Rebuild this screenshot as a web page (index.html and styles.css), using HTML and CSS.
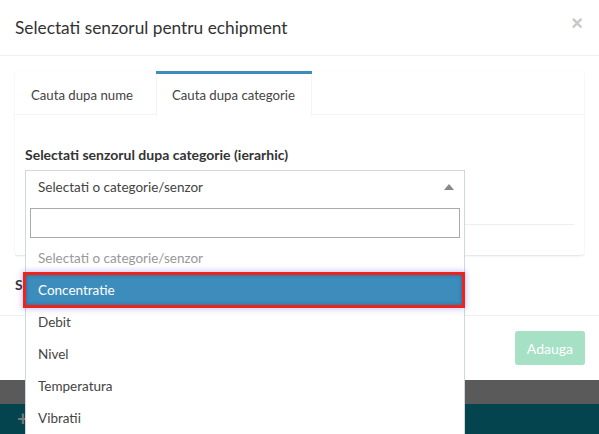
FILE: index.html
```html
<!DOCTYPE html>
<html lang="ro">
<head>
  <meta charset="UTF-8" />
  <meta name="viewport" content="width=device-width, initial-scale=1.0"/>
  <title>Selectati senzorul</title>
  <link rel="stylesheet" href="styles.css">
</head>
<body>
  <div class="modal">
    <div class="modal-header">
      <h4 class="modal-title">Selectati senzorul pentru echipment</h4>
      <button class="close">&times;</button>
    </div>

    <div class="modal-body">
      <div class="tabs-box">
        <ul class="tabs">
          <li><a>Cauta dupa nume</a></li>
          <li class="active"><a>Cauta dupa categorie</a></li>
        </ul>
        <div class="tab-content">
          <div class="form-group">
            <label>Selectati senzorul dupa categorie (ierarhic)</label>
            <div class="select-wrap">
              <div class="select">
                <span>Selectati o categorie/senzor</span>
                <span class="arrow"></span>
              </div>
              <!-- open dropdown of the select -->
              <div class="dropdown">
                <div class="search"><input type="text"></div>
                <ul class="options">
                  <li class="placeholder">Selectati o categorie/senzor</li>
                  <li class="highlighted">Concentratie</li>
                  <li>Debit</li>
                  <li>Nivel</li>
                  <li>Temperatura</li>
                  <li>Vibratii</li>
                </ul>
              </div>
            </div>
          </div>
          <hr>
        </div>
      </div>
      <label class="selected-label">S</label>
    </div>

    <div class="modal-footer">
      <button class="btn-add" disabled>Adauga</button>
    </div>
  </div>

  <div class="backdrop">
    <div class="page-bar"><span class="plus">+</span></div>
  </div>
</body>
</html>
```

FILE: styles.css
```css
* {
  box-sizing: border-box;
}

body {
  margin: 0;
  height: 434px;
  overflow: hidden;
  font-family: Lato, "Open Sans", sans-serif;
  font-size: 13.5px;
  line-height: 20px;
  color: #333;
  background: #5a5a5a;
}

.modal {
  background: #fff;
}

.modal-header {
  display: flex;
  justify-content: space-between;
  align-items: flex-start;
  padding: 15px;
  border-bottom: 1px solid #f0f0f0;
}

.modal-title {
  margin: 0;
  font-size: 17.3px;
  font-weight: 400;
  line-height: 25px;
  color: #333;
}

.close {
  border: 0;
  background: none;
  padding: 0;
  margin-top: -2px;
  margin-right: 1px;
  font-size: 20px;
  font-weight: 700;
  line-height: 20px;
  color: #c8c8c8;
  font-family: Arial, sans-serif;
}

.modal-body {
  padding: 15px;
}

.tabs-box {
  background: #fff;
  border-radius: 3px;
  box-shadow: 0 1px 2px rgba(0,0,0,0.12);
  margin-bottom: 20px;
}

.tabs {
  display: flex;
  list-style: none;
  margin: 0;
  padding: 0;
  border-bottom: 1px solid #f4f4f4;
}

.tabs li {
  border-top: 3px solid transparent;
  margin-bottom: -2px;
  margin-right: 5px;
}

.tabs li:first-child {
  margin-right: 7px;
}

.tabs li a {
  display: block;
  padding: 10px 15px;
  border: 1px solid transparent;
  font-size: 13.2px;
  color: #444;
}

.tabs li.active {
  border-top-color: #3c8dbc;
}

.tabs li.active a {
  background: #fff;
  padding-right: 16px;
  border-left-color: #f4f4f4;
  border-right-color: #f4f4f4;
}

.tab-content {
  padding: 30px 10px 10px;
}

.form-group {
  margin-bottom: 15px;
}

.form-group label,
.selected-label {
  display: block;
  font-size: 14px;
  font-weight: 700;
  margin-bottom: 5px;
  color: #333;
}

.select-wrap {
  position: relative;
  width: 440px;
}

.select {
  display: flex;
  justify-content: space-between;
  align-items: center;
  height: 34px;
  padding: 0 12px;
  border: 1px solid #d2d6de;
  color: #444;
}

.arrow {
  width: 0;
  height: 0;
  border-left: 5px solid transparent;
  border-right: 5px solid transparent;
  border-bottom: 6px solid #888;
  margin-right: -2px;
}

.dropdown {
  position: absolute;
  top: 33px;
  left: 0;
  width: 440px;
  z-index: 10;
  background: #fff;
  border: 1px solid #d2d6de;
  border-top: 0;
}

.search {
  padding: 4px;
}

.search input {
  display: block;
  width: 100%;
  height: 30px;
  margin: 1px 0 0;
  border: 1px solid #aaa;
  outline: none;
}

.options {
  list-style: none;
  margin: 0;
  padding: 0;
}

.options li {
  padding: 6px 12px;
  color: #444;
}

.options li.placeholder {
  color: #999;
}

.options li.highlighted {
  background: #3c8dbc;
  color: #fff;
  outline: 3px solid #f0221a;
  outline-offset: -1px;
  box-shadow: 0 0 6px 3px rgba(110, 90, 220, 0.35), inset 0 0 5px rgba(0, 20, 80, 0.45);
  margin: 0 1px 0 -1px;
  padding-left: 13px;
}

hr {
  margin: 20px 0;
  border: 0;
  border-top: 1px solid #eee;
}

.modal-footer {
  display: flex;
  justify-content: flex-end;
  padding: 15px 14px 15px;
  border-top: 1px solid #eee;
}

.btn-add {
  height: 34px;
  padding: 0 12px;
  border: 0;
  border-radius: 3px;
  background: #a6e0c5;
  color: #fff;
  font-family: inherit;
  font-size: 14px;
}

.backdrop {
  padding-top: 24px;
}

.page-bar {
  height: 30px;
  background: #03444f;
  padding: 4px 0 0 17px;
}

.plus {
  color: #7a7a7a;
  font-size: 20px;
  font-weight: 700;
}
```
